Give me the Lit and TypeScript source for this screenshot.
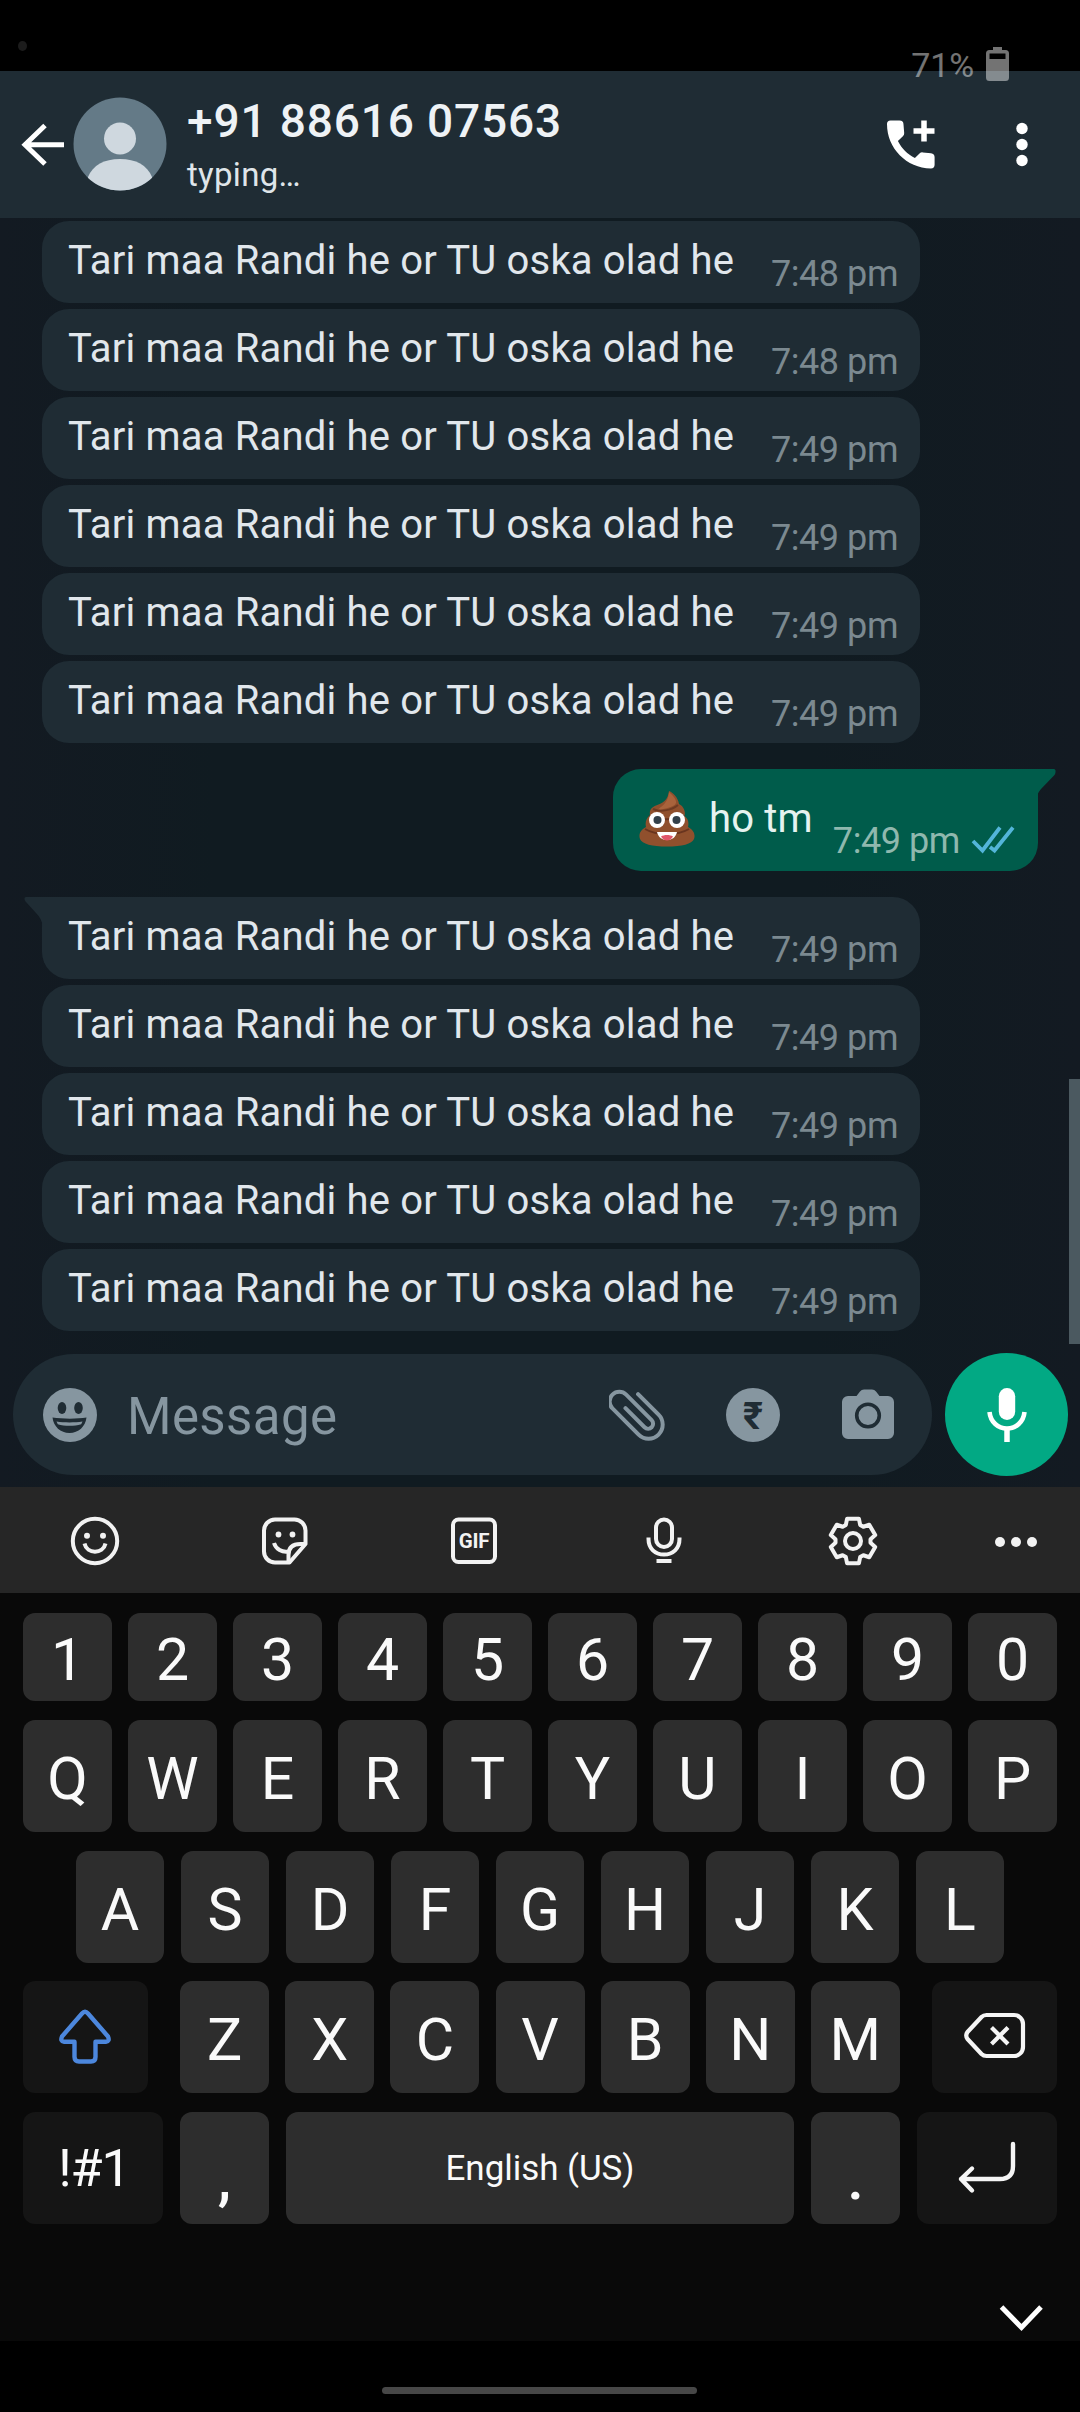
import { LitElement, html, css, svg } from "lit";
import { customElement, property } from "lit/decorators.js";

interface Message {
  text: string;
  time: string;
  tail?: boolean;
  outgoing?: boolean;
}

const LINE = "Tari maa Randi he or TU oska olad he";

const MESSAGES: Message[] = [
  { text: LINE, time: "7:48 pm" },
  { text: LINE, time: "7:48 pm" },
  { text: LINE, time: "7:49 pm" },
  { text: LINE, time: "7:49 pm" },
  { text: LINE, time: "7:49 pm" },
  { text: LINE, time: "7:49 pm" },
  { text: "ho tm", time: "7:49 pm", outgoing: true },
  { text: LINE, time: "7:49 pm", tail: true },
  { text: LINE, time: "7:49 pm" },
  { text: LINE, time: "7:49 pm" },
  { text: LINE, time: "7:49 pm" },
  { text: LINE, time: "7:49 pm" },
];

/* Six-toothed gear outline centred on the origin. */
function gearPath(): string {
  const pts: string[] = [];
  for (let k = 0; k < 6; k++) {
    const mid = k * 60 - 90;
    for (const [r, a] of [[17.6, -24], [23, -15], [23, 15], [17.6, 24]]) {
      const t = ((mid + a) * Math.PI) / 180;
      pts.push(`${(r * Math.cos(t)).toFixed(2)} ${(r * Math.sin(t)).toFixed(2)}`);
    }
  }
  return `M${pts.join("L")}Z`;
}

@customElement("status-bar")
export class StatusBar extends LitElement {
  static styles = css`
    :host { display: block; height: 71px; background: #000; position: relative; z-index: 2; }
    .camera { position: absolute; left: 18px; top: 41px; width: 9px; height: 10px; border-radius: 50%; background: #1c1c1c; }
    .battery { position: absolute; right: 71px; top: 42px; display: flex; align-items: center; opacity: 0.45; color: #fff; }
    .pct { font: 400 34px/40px Roboto, sans-serif; letter-spacing: -0.1px; margin-right: 12px; padding-top: 3px; }
    .icon { display: block; margin-top: 1px; }
  `;
  render() {
    return html`
      <div class="camera"></div>
      <div class="battery">
        <span class="pct">71%</span>
        <svg class="icon" width="23" height="36" viewBox="0 0 23 36" fill="#fff">
          <path fill-rule="evenodd" d="M7 1h9v3h3.500a3.500 3.500 0 0 1 3.500 3.500v24a3.500 3.500 0 0 1-3.500 3.500h-16a3.500 3.500 0 0 1-3.500-3.500v-24a3.500 3.500 0 0 1 3.500-3.500h3.500zM3.500 7.500v5.500h16v-5.500z" />
        </svg>
      </div>
    `;
  }
}

@customElement("chat-header")
export class ChatHeader extends LitElement {
  static styles = css`
    :host { display: flex; height: 147px; background: #1f2c34; box-sizing: border-box; padding-left: 20px; font-family: Roboto, sans-serif; align-items: flex-start; position: relative; z-index: 1; }
    svg { display: block; flex: none; }
    .back { margin-top: 51px; }
    .avatar { margin: 26px 0 0 6px; }
    .who { margin-left: 20px; padding-top: 23px; flex: 1; white-space: nowrap; }
    .name { font-size: 46px; line-height: 54px; font-weight: 500; color: #eef2f5; letter-spacing: 0.85px; }
    .state { font-size: 33px; line-height: 40px; margin-top: 7px; color: #dfe5e9; letter-spacing: 0.3px; }
    .call { margin: 44px 77px 0 0; }
    .more { margin: 50px 52px 0 0; }
  `;
  render() {
    return html`
      <svg class="back" width="47" height="46" viewBox="0 0 47 46" fill="none" stroke="#fff" stroke-width="5">
        <path d="M44 22.700H5M25 3.500 5 22.700 25 42" />
      </svg>
      <svg class="avatar" width="94" height="94" viewBox="0 0 94 94">
        <clipPath id="disc"><circle cx="47" cy="47" r="46.500" /></clipPath>
        <circle cx="47" cy="47" r="46.500" fill="#647a87" />
        <g clip-path="url(#disc)" fill="#cfd8df">
          <circle cx="47" cy="41.500" r="16" />
          <path d="M15 80c5-12 16-18 32-18s27 6 32 18v20H15z" />
        </g>
      </svg>
      <div class="who">
        <div class="name">+91 88616 07563</div>
        <div class="state">typing…</div>
      </div>
      <svg class="call" width="54" height="56" viewBox="0 0 54 56" fill="#fff">
        <path d="M5.500 5.500h9a4 4 0 0 1 4 4l.700 8.500a4 4 0 0 1-1.300 3.300l-5 4.700c4 8 9.500 13 17 17l4.600-4.400a4 4 0 0 1 3.300-1.200l8.200.900a4 4 0 0 1 3.600 4v7.500a3.700 3.700 0 0 1-3.700 3.700C21.500 53 2 33.500 2 9a3.500 3.500 0 0 1 3.500-3.500z" />
        <path d="M39 5.500v21M28.500 16h21" fill="none" stroke="#fff" stroke-width="5.500" />
      </svg>
      <svg class="more" width="12" height="46" viewBox="0 0 12 46" fill="#fff">
        <circle cx="6" cy="7.500" r="5.700" /><circle cx="6" cy="23.500" r="5.700" /><circle cx="6" cy="39.500" r="5.700" />
      </svg>
    `;
  }
}

@customElement("chat-bubble")
export class ChatBubble extends LitElement {
  @property({ attribute: false }) message!: Message;
  static styles = css`
    :host { display: block; font-family: Roboto, sans-serif; white-space: nowrap; }
    .in { position: relative; display: flex; justify-content: space-between; width: 878px; height: 82px; margin-left: 42px; border-radius: 27px; background: #1f2c34; box-sizing: border-box; padding: 0 22px 0 26px; }
    .in.tail { border-top-left-radius: 0; }
    .text { font-size: 40px; line-height: 79px; color: #e1e7ec; letter-spacing: 0.18px; }
    .time { font-size: 36px; line-height: 106px; color: #7b8990; letter-spacing: -0.45px; }
    .nub { position: absolute; left: -18px; top: 0; }
    .out { position: relative; display: flex; width: 425px; height: 102px; margin: 26px 42px 26px auto; border-radius: 28px 0 28px 28px; background: #005c4b; box-sizing: border-box; padding-left: 26px; }
    .out .nub { left: auto; right: -18px; }
    .out .text { color: #e6f3f0; line-height: 100px; margin-left: 14px; }
    .out .time { color: #8fb8ae; line-height: 145px; margin-left: 20px; }
    .out .ticks { margin: 56px 0 0 11px; }
    .emoji { margin-top: 20px; }
    svg { display: block; flex: none; }
  `;
  private incoming(m: Message) {
    return html`<div class="in ${m.tail ? "tail" : ""}">
      ${m.tail
        ? html`<svg class="nub" width="19" height="30" viewBox="0 0 19 30"><path d="M2 0H19V30C18 24 16 20 12 16L2 5C0 3 0 0 2 0Z" fill="#1f2c34" /></svg>`
        : null}
      <span class="text">${m.text}</span><span class="time">${m.time}</span>
    </div>`;
  }
  private outgoing(m: Message) {
    return html`<div class="out">
      <svg class="nub" width="19" height="30" viewBox="0 0 19 30"><path d="M0 0H17C19 0 19 4 17.500 6L4 20C1 23.500 0 26 0 30Z" fill="#005c4b" /></svg>
      <svg class="emoji" width="56" height="60" viewBox="0 0 56 60">
        <path d="M30 2c3 1 9 6 10 13 4 2 7 7 5.500 12 4 3 4.500 7 3.500 11 6 3 7.500 8 6 12-2 5-12 7.500-27 7.500S3 55 1 50c-1.500-4 0-9 6-12-1-4 0-9 4-12-1-5 2-8 6-9.500C24 14 29 11 30 2z" fill="#90502d" />
        <path d="M30 3c2 2 8 7 7 11-2 5-14 5-20 9 1-4 12-6 13-20z" fill="#a9633c" />
        <path d="M10 27c10 5 26 4 35-1M6 40c12 7 32 7 44 0" fill="none" stroke="#69351f" stroke-width="2" />
        <path d="M14 20c6 3 18 2 25-4" fill="none" stroke="#6f3a22" stroke-width="2" />
        <circle cx="18" cy="31" r="8" fill="#fff" /><circle cx="38" cy="31" r="8" fill="#fff" />
        <circle cx="18.500" cy="31" r="4" fill="#33404a" /><circle cx="37.500" cy="31" r="4" fill="#33404a" />
        <path d="M18 43h20c-1 5-5 8-10 8s-9-3-10-8z" fill="#fff" />
        <path d="M22 47.500c3-2 9-2 12 0-2 3-4 4-6 4s-4-1-6-4z" fill="#e0566a" />
      </svg>
      <span class="text">${m.text}</span><span class="time">${m.time}</span>
      <svg class="ticks" width="44" height="30" viewBox="0 0 44 30" fill="none" stroke="#53b5d9" stroke-width="3.800">
        <path d="M2 16 11.500 25.500 29 2.500M19 22 23.500 25.500 42 2.500" />
      </svg>
    </div>`;
  }
  render() {
    return this.message.outgoing ? this.outgoing(this.message) : this.incoming(this.message);
  }
}

@customElement("composer-bar")
export class ComposerBar extends LitElement {
  static styles = css`
    :host { display: flex; height: 133px; box-sizing: border-box; padding-left: 13px; align-items: flex-start; font-family: Roboto, sans-serif; }
    .field { display: flex; align-items: center; width: 919px; height: 121px; border-radius: 61px; background: #1f2c34; box-sizing: border-box; padding-left: 29px; margin-right: 13px; }
    .hint { font-size: 51px; line-height: 60px; color: #8696a0; margin-left: 29px; flex: 1; padding-top: 4px; letter-spacing: 0.4px; }
    svg { display: block; flex: none; }
    .clip { margin-right: 60px; }
    .pay { margin-right: 60px; }
    .cam { margin-right: 37px; }
    .mic { width: 123px; height: 123px; margin-top: -1px; border-radius: 50%; background: #02a984; display: flex; align-items: center; justify-content: center; }
    .rupee { font: 700 38px Roboto, sans-serif; }
  `;
  render() {
    return html`
      <div class="field">
        <svg width="56" height="56" viewBox="0 0 56 56">
          <circle cx="28" cy="28" r="27" fill="#8696a0" />
          <ellipse cx="20" cy="21" rx="4.300" ry="6" fill="#1f2c34" /><ellipse cx="36.500" cy="21" rx="4.300" ry="6" fill="#1f2c34" />
          <path d="M10.500 30.500c10 1.500 25 1.500 34 0-1 9-8 15.500-17 15.500s-16-6.500-17-15.500z" fill="#1f2c34" />
          <path d="M14.500 34.500c8 1.200 18 1.200 26 0l-1.300 2.800c-7 2-16.500 2-23.400 0z" fill="#8696a0" />
        </svg>
        <span class="hint">Message</span>
        <svg class="clip" width="56" height="56" viewBox="-28 -28 56 56" fill="none" stroke="#8696a0" stroke-width="4" stroke-linecap="round">
          <path transform="rotate(45)" d="M-14-15.500H15A14.100 14.100 0 0 1 15 12.700H-22A9.700 9.700 0 0 1-22-6.700H14A5 5 0 0 1 14 3.300H-13" />
        </svg>
        <svg class="pay" width="56" height="56" viewBox="0 0 56 56">
          <circle cx="28" cy="28" r="27" fill="#8696a0" />
          <text class="rupee" x="28" y="42" text-anchor="middle" fill="#1f2c34">₹</text>
        </svg>
        <svg class="cam" width="54" height="56" viewBox="0 0 54 56">
          <path d="M19 4.500Q20.500 2.500 23 2.500h8q2.500 0 4 2L38.500 9H47a6 6 0 0 1 6 6v31a6 6 0 0 1-6 6H7a6 6 0 0 1-6-6V15a6 6 0 0 1 6-6h8.500z" fill="#8696a0" />
          <circle cx="27" cy="28.500" r="11.300" fill="none" stroke="#1f2c34" stroke-width="3.600" />
        </svg>
      </div>
      <div class="mic">
        <svg width="44" height="60" viewBox="0 0 44 60">
          <rect x="13.800" y="3" width="16.400" height="32" rx="8.200" fill="#fff" />
          <path d="M4.500 27c1 10 8.500 16.500 17.500 16.500S38.500 37 39.500 27" fill="none" stroke="#fff" stroke-width="4.600" />
          <path d="M22 43v14" stroke="#fff" stroke-width="5.500" />
        </svg>
      </div>
    `;
  }
}

@customElement("soft-keyboard")
export class SoftKeyboard extends LitElement {
  static styles = css`
    :host { display: block; background: #090909; font-family: Roboto, sans-serif; color: #fafafa; height: 854px; }
    svg { display: block; flex: none; }
    .tools { height: 106px; background: #262626; display: flex; align-items: center; box-sizing: border-box; padding: 2px 0 0 70px; gap: 139.500px; }
    .tools .dots { margin-left: -26px; }
    .gif { font: 700 20.500px Roboto, sans-serif; letter-spacing: -0.2px; }
    .row { display: flex; justify-content: space-between; box-sizing: border-box; height: 112px; margin: 18.500px 23px 0; }
    .digits { height: 88px; margin-top: 19.500px; }
    .digits + .row { margin-top: 19.500px; }
    .home { margin-left: 76px; margin-right: 76px; }
    .key { width: 89px; box-sizing: border-box; border-radius: 12px; background: #2d2d2d; display: flex; align-items: center; justify-content: center; font-size: 59px; line-height: 70px; padding-top: 6px; white-space: nowrap; }
    .home .key { width: 88px; }
    .dark { background: #151515; padding-top: 0; }
    .shift { width: 125px; margin-right: 16px; padding-right: 2px; }
    .erase { width: 125px; margin-left: 16px; }
    .sym, .enter { width: 140px; }
    .sym { font-size: 52px; padding: 3px 0 0 2px; letter-spacing: -1px; }
    .space { width: 508px; font-size: 35px; padding-top: 2px; letter-spacing: -0.05px; }
    .mark { font-weight: 500; font-size: 60px; padding-top: 22px; }
    .foot { display: flex; justify-content: flex-end; padding: 77px 34px 0 0; }
  `;
  private keys(chars: string) {
    return [...chars].map((c) => html`<div class="key">${c}</div>`);
  }
  render() {
    return html`
      <div class="tools">
        <svg width="50" height="50" viewBox="0 0 50 50" fill="none" stroke="#f2f2f2" stroke-width="4">
          <circle cx="25" cy="25" r="22.200" />
          <g fill="#f2f2f2" stroke="none"><circle cx="17" cy="19.700" r="3" /><circle cx="33" cy="19.700" r="3" /></g>
          <path d="M14.500 27.500c2.500 11 18.500 11 21 0" />
        </svg>
        <svg width="50" height="50" viewBox="0 0 50 50" fill="none" stroke="#f2f2f2" stroke-width="4" stroke-linejoin="round">
          <path d="M15 3.500h19.500a11 11 0 0 1 11 11V28L29.500 46.500H15a11 11 0 0 1-11-11v-21a11 11 0 0 1 11-11z" />
          <path d="M45 28h-4.500C32 28 28.500 32 28.500 39v7" />
          <g fill="#f2f2f2" stroke="none"><circle cx="18.500" cy="18.500" r="2.900" /><circle cx="32.500" cy="18.500" r="2.900" /></g>
          <path d="M14 27c2 6.500 8 9.500 14.500 8.500" />
        </svg>
        <svg width="50" height="50" viewBox="0 0 50 50" fill="none" stroke="#f2f2f2" stroke-width="4">
          <rect x="4" y="3.500" width="42" height="42.500" rx="5.500" />
          <text class="gif" x="25" y="32" text-anchor="middle" fill="#f2f2f2" stroke="none">GIF</text>
        </svg>
        <svg width="50" height="50" viewBox="0 0 50 50" fill="none" stroke="#f2f2f2" stroke-width="4">
          <rect x="17" y="3.500" width="16" height="27.500" rx="8" />
          <path d="M9.500 21.500v1.500c0 9.500 6.500 15.500 15.500 15.500s15.500-6 15.500-15.500v-1.500M17.500 45h15" />
        </svg>
        <svg width="50" height="54" viewBox="-25 -27 50 54" fill="none" stroke="#f2f2f2" stroke-width="4" stroke-linejoin="round">
          ${svg`<path d=${gearPath()} />`}
          <circle r="8" />
        </svg>
        <svg class="dots" width="50" height="50" viewBox="0 0 50 50" fill="#f2f2f2">
          <circle cx="8" cy="26" r="5" /><circle cx="24" cy="26" r="5" /><circle cx="40" cy="26" r="5" />
        </svg>
      </div>
      <div class="row digits">${this.keys("1234567890")}</div>
      <div class="row">${this.keys("QWERTYUIOP")}</div>
      <div class="row home">${this.keys("ASDFGHJKL")}</div>
      <div class="row">
        <div class="key dark shift">
          <svg width="54" height="60" viewBox="0 0 54 60" fill="none" stroke="#4c87dd" stroke-width="4.400" stroke-linejoin="round">
            <path d="M24 6.500q3-3.500 6 0L50 29.500q2 5-2 5.200H37.500V50q0 4.500-4.500 4.500H21q-4.500 0-4.500-4.500V34.700H6q-4-.200-2-5.200z" />
          </svg>
        </div>
        ${this.keys("ZXCVBNM")}
        <div class="key dark erase">
          <svg width="62" height="50" viewBox="0 0 62 50" fill="none" stroke="#f5f5f5" stroke-width="4.200" stroke-linejoin="round">
            <path d="M22.500 3H50a9 9 0 0 1 9 9v23a9 9 0 0 1-9 9H22.500q-3 0-5-2L3.500 27q-2.500-3.500 0-7L17.500 5q2-2 5-2z" />
            <path d="M27.500 15.500 44 32M44 15.500 27.500 32" />
          </svg>
        </div>
      </div>
      <div class="row">
        <div class="key dark sym">!#1</div>
        <div class="key mark">,</div>
        <div class="key space">English (US)</div>
        <div class="key mark">.</div>
        <div class="key dark enter">
          <svg width="60" height="54" viewBox="0 0 60 54" fill="none" stroke="#f5f5f5" stroke-width="4.400" stroke-linecap="round" stroke-linejoin="round">
            <path d="M56 3v22q0 13-13 13H4M15 27.500 4 38 15 49.500" />
          </svg>
        </div>
      </div>
      <div class="foot">
        <svg width="50" height="34" viewBox="0 0 50 34" fill="none" stroke="#fff" stroke-width="5"><path d="M5.500 6 25.500 26.500 45 6" /></svg>
      </div>
    `;
  }
}

@customElement("app-root")
export class AppRoot extends LitElement {
  static styles = css`
    :host { display: block; width: 1080px; height: 2412px; background: #000; overflow: hidden; }
    .chat { position: relative; height: 1269px; background: linear-gradient(90deg, #131a22, #101b21 20%, #101b21 75%, #131a22); }
    .thread { height: 1136px; box-sizing: border-box; padding-top: 3px; display: flex; flex-direction: column; gap: 6px; }
    .scroll { position: absolute; right: 0; top: 861px; width: 11px; height: 265px; background: #4b5960; }
    .nav { height: 71px; display: flex; justify-content: center; align-items: flex-start; }
    .pill { width: 315px; height: 7px; margin: 46px 2px 0 0; border-radius: 4px; background: #474747; }
    .mine { margin: -6px 0; }
  `;
  render() {
    return html`
      <status-bar></status-bar>
      <chat-header></chat-header>
      <div class="chat">
        <div class="thread">
          ${MESSAGES.map((m) => html`<chat-bubble class=${m.outgoing ? "mine" : "theirs"} .message=${m}></chat-bubble>`)}
        </div>
        <composer-bar></composer-bar>
        <div class="scroll"></div>
      </div>
      <soft-keyboard></soft-keyboard>
      <div class="nav"><div class="pill"></div></div>
    `;
  }
}
